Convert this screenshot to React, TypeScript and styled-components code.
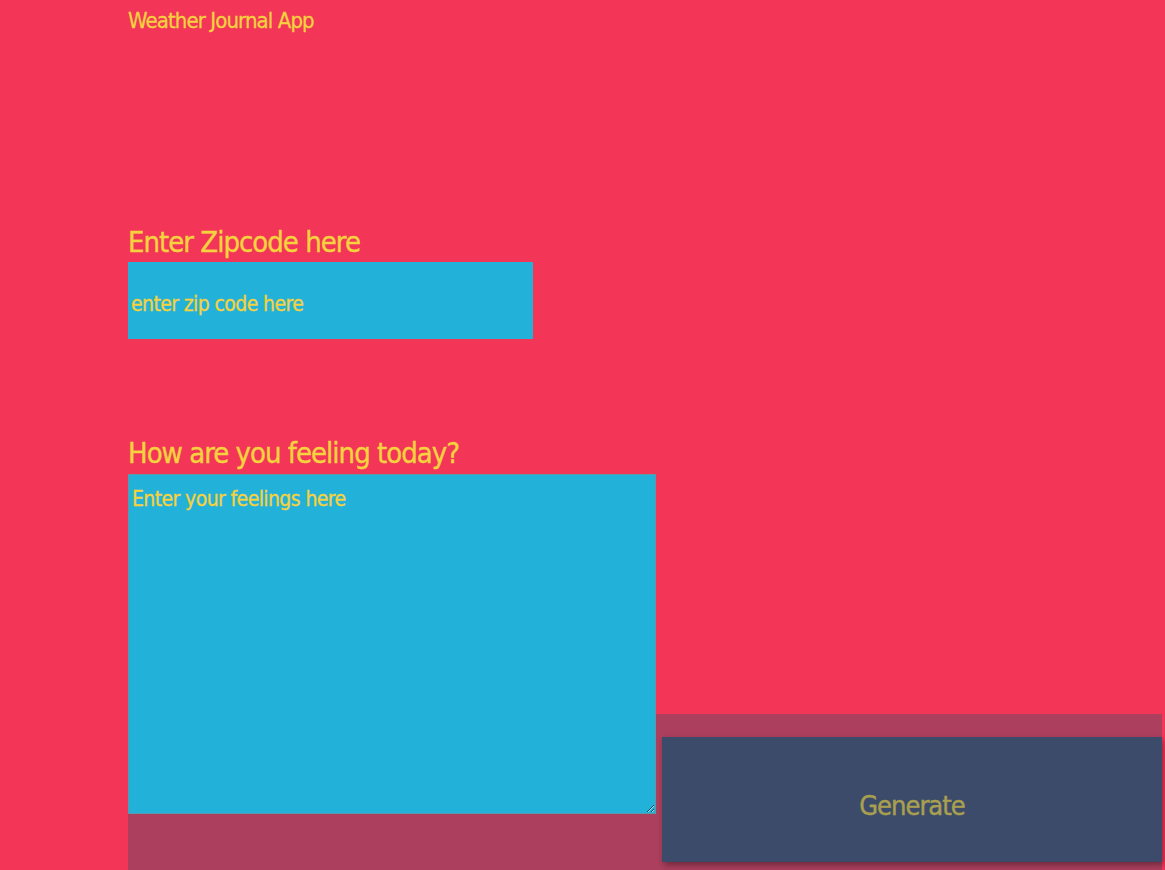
import React from "react";
import styled, { createGlobalStyle } from "styled-components";

const FONT = `"Liberation Sans Narrow", "DejaVu Sans Condensed", "DejaVu Sans", sans-serif`;

const GlobalStyle = createGlobalStyle`
  html, body {
    margin: 0;
    padding: 0;
    background: #f33558;
    overflow: hidden;
  }
  body {
    font-family: ${FONT};
    font-stretch: condensed;
  }
`;

const Page = styled.div`
  display: flex;
  flex-direction: column;
  padding: 6px 3px 0 128px;
  color: #f5d23e;
`;

const Title = styled.div`
  font-size: 22px;
  line-height: 30px;
  letter-spacing: -0.9px;
  -webkit-text-stroke: 0.3px #f5d23e;
`;

const ZipSection = styled.section`
  display: flex;
  flex-direction: column;
  align-items: flex-start;
  margin-top: 186px;
`;

const Label = styled.label`
  display: block;
  font-size: 29px;
  line-height: 40px;
  letter-spacing: -1px;
  -webkit-text-stroke: 0.4px #f5d23e;
`;

const ZipInput = styled.input`
  box-sizing: border-box;
  width: 405px;
  height: 77px;
  margin: 0;
  padding: 6px 3px 0;
  border: none;
  outline: none;
  background: #22b1d9;
  color: #f5d23e;
  font-family: ${FONT};
  font-stretch: condensed;
  font-size: 21px;
  letter-spacing: -0.6px;
  &::placeholder {
    color: #f5d23e;
    opacity: 1;
    -webkit-text-stroke: 0.3px #f5d23e;
  }
`;

const EntryHolder = styled.section`
  display: grid;
  grid-template-columns: 528px 1fr;
  grid-template-rows: auto auto;
  margin-top: 94px;
  padding-bottom: 8px;
  background: linear-gradient(
    to bottom,
    transparent 0,
    transparent 281px,
    #ab3f5d 281px,
    #ab3f5d 100%
  );
`;

const FeelLabel = styled(Label)`
  grid-column: 1 / 3;
  grid-row: 1;
`;

const Feelings = styled.textarea`
  grid-column: 1;
  grid-row: 2;
  box-sizing: border-box;
  width: 528px;
  height: 340px;
  margin: 1px 0 0;
  padding: 6px 3px 2px;
  border: 1px solid #5b98aa;
  outline: none;
  background: #22b1d9;
  color: #f5d23e;
  font-family: ${FONT};
  font-stretch: condensed;
  font-size: 21px;
  line-height: 36px;
  letter-spacing: -0.6px;
  &::placeholder {
    color: #f5d23e;
    opacity: 1;
    -webkit-text-stroke: 0.3px #f5d23e;
  }
`;

const GenerateButton = styled.button`
  grid-column: 2;
  grid-row: 2;
  align-self: start;
  height: 125px;
  margin: 264px 0 0 6px;
  padding: 12px 0 0;
  border: none;
  background: #3d4b6b;
  color: #a9a04f;
  font-family: ${FONT};
  font-stretch: condensed;
  font-size: 27px;
  letter-spacing: -1px;
  -webkit-text-stroke: 0.4px #a9a04f;
  box-shadow: 2px 3px 6px rgba(0, 0, 0, 0.35);
  cursor: pointer;
`;

export default function App() {
  return (
    <>
      <GlobalStyle />
      <Page>
        <Title>Weather Journal App</Title>
        <ZipSection>
          <Label htmlFor="zip">Enter Zipcode here</Label>
          <ZipInput id="zip" type="text" placeholder="enter zip code here" />
        </ZipSection>
        <EntryHolder>
          <FeelLabel htmlFor="feelings">How are you feeling today?</FeelLabel>
          <Feelings id="feelings" placeholder="Enter your feelings here" />
          <GenerateButton type="button">Generate</GenerateButton>
        </EntryHolder>
      </Page>
    </>
  );
}
